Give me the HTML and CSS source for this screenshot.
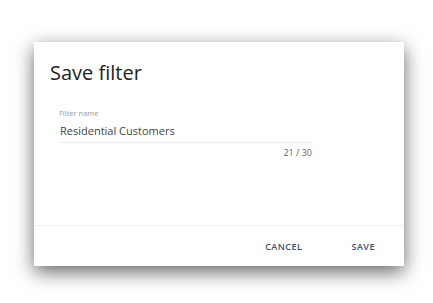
FILE: index.html
```html
<!DOCTYPE html>
<html>
<head>
<meta charset="utf-8">
<link rel="stylesheet" href="styles.css">
</head>
<body>
<div class="stage">
  <div class="dialog">
    <div class="dialog-body">
      <h2 class="title">Save filter</h2>
      <div class="field">
        <label class="field-label">Filter name</label>
        <div class="field-input">Residential Customers</div>
        <div class="field-counter">21 / 30</div>
      </div>
    </div>
    <div class="dialog-actions">
      <button class="btn">CANCEL</button>
      <button class="btn">SAVE</button>
    </div>
  </div>
</div>
</body>
</html>
```
FILE: styles.css
```css
html, body {
  margin: 0;
  padding: 0;
  background: #ffffff;
  font-family: "Open Sans", "Liberation Sans", sans-serif;
}
.stage {
  padding: 42px 0 40px 34px;
}
.dialog {
  width: 370px;
  height: 224px;
  background: #ffffff;
  box-shadow: 0 6px 18px rgba(0, 0, 0, 0.6);
  display: flex;
  flex-direction: column;
}
.dialog-body {
  flex: 1;
  padding: 17px 16px 0 16px;
}
.title {
  margin: 0;
  font-size: 20px;
  font-weight: 400;
  line-height: 27px;
  color: #222222;
}
.field {
  width: 255px;
  margin: 22px 0 0 8px;
  display: flex;
  flex-direction: column;
}
.field-label {
  font-size: 7.5px;
  line-height: 10px;
  color: #9a9a9a;
  padding-left: 1px;
}
.field-input {
  font-size: 11px;
  line-height: 15px;
  color: #444444;
  padding: 5px 0 4px 2px;
  border-bottom: 1px solid #ececec;
}
.field-counter {
  align-self: flex-end;
  font-size: 9px;
  line-height: 12px;
  margin-top: 4px;
  color: #666666;
  padding-right: 1px;
}
.dialog-actions {
  height: 40px;
  border-top: 1px solid #efefef;
  display: flex;
  justify-content: flex-end;
  align-items: center;
  gap: 41px;
  padding-right: 25px;
}
.btn {
  background: none;
  border: none;
  padding: 0 4px;
  font-family: "Open Sans", "Liberation Sans", sans-serif;
  font-size: 9px;
  font-weight: 600;
  letter-spacing: 0.5px;
  color: #3b5173;
}
```
